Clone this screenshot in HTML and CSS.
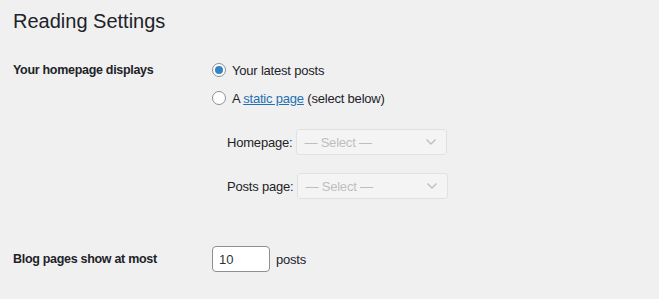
FILE: index.html
```html
<!DOCTYPE html>
<html lang="en">
<head>
    <meta charset="UTF-8">
    <meta name="viewport" content="width=device-width, initial-scale=1.0">
    <title>Reading Settings</title>
    <link rel="stylesheet" href="styles.css">
</head>
<body>
    <div class="wrap">
        <h1>Reading Settings</h1>

        <div class="form-row first">
            <div class="row-label">Your homepage displays</div>
            <div class="row-field">
                <label class="option">
                    <input type="radio" name="show_on_front" checked>
                    <span>Your latest posts</span>
                </label>
                <label class="option">
                    <input type="radio" name="show_on_front">
                    <span>A <a href="#">static page</a> (select below)</span>
                </label>
                <div class="page-selects">
                    <div class="select-row">
                        <label for="page-on-front">Homepage:</label>
                        <select id="page-on-front" disabled>
                            <option>&mdash; Select &mdash;</option>
                        </select>
                    </div>
                    <div class="select-row">
                        <label for="page-for-posts">Posts page:</label>
                        <select id="page-for-posts" disabled>
                            <option>&mdash; Select &mdash;</option>
                        </select>
                    </div>
                </div>
            </div>
        </div>

        <div class="form-row last">
            <div class="row-label">Blog pages show at most</div>
            <div class="row-field inline">
                <input type="number" class="small-text" value="10">
                <span>posts</span>
            </div>
        </div>
    </div>
</body>
</html>
```

FILE: styles.css
```css
body {
    margin: 0;
    background-color: #f0f0f1;
    color: #1d2327;
    font-family: "Segoe UI", "Liberation Sans", Arial, sans-serif;
    font-size: 13px;
    letter-spacing: -0.2px;
}
.wrap {
    padding: 0 13px;
}
h1 {
    font-size: 20px;
    font-weight: 400;
    line-height: 29px;
    margin: 7px 0 0;
    letter-spacing: 0;
}
.form-row {
    display: flex;
}
.form-row.first {
    margin-top: 20px;
}
.form-row.last {
    margin-top: 47px;
}
.row-label {
    width: 199px;
    font-size: 12.5px;
    font-weight: 600;
    letter-spacing: -0.3px;
    line-height: 28px;
}
.form-row.last .row-label {
    line-height: 26px;
}
.option {
    display: flex;
    align-items: center;
    height: 28px;
}
.option input {
    appearance: none;
    -webkit-appearance: none;
    width: 14px;
    height: 14px;
    margin: 0 6px 0 0;
    border: 1px solid #8c8f94;
    border-radius: 50%;
    background: #fff;
    display: flex;
    align-items: center;
    justify-content: center;
}
.option input:checked::before {
    content: "";
    width: 8px;
    height: 8px;
    border-radius: 50%;
    background: #3582c4;
}
a {
    color: #2271b1;
    text-decoration: underline;
}
.page-selects {
    padding: 17px 0 0 15px;
    display: flex;
    flex-direction: column;
    gap: 18px;
}
.select-row {
    display: flex;
    align-items: center;
    gap: 4px;
}
select {
    appearance: none;
    -webkit-appearance: none;
    width: 151px;
    height: 26px;
    padding: 0 24px 0 7px;
    border: 1px solid #dcdcde;
    border-radius: 3px;
    background-color: #f6f7f7;
    color: #a7aaad;
    font-family: inherit;
    font-size: 13px;
    letter-spacing: -0.2px;
    background-image: url("data:image/svg+xml,%3Csvg xmlns='http://www.w3.org/2000/svg' width='12' height='8' viewBox='0 0 12 8'%3E%3Cpath d='M1.5 1.5 6 6l4.5-4.5' fill='none' stroke='%23a7aaad' stroke-width='1.4'/%3E%3C/svg%3E");
    background-repeat: no-repeat;
    background-position: right 9px center;
}
.row-field.inline {
    display: flex;
    align-items: center;
    gap: 6px;
}
.small-text {
    box-sizing: border-box;
    width: 58px;
    height: 26px;
    padding: 0 6px;
    border: 1px solid #8c8f94;
    border-radius: 4px;
    background: #fff;
    color: #2c3338;
    font-family: inherit;
    font-size: 13px;
    -moz-appearance: textfield;
}
.small-text::-webkit-inner-spin-button,
.small-text::-webkit-outer-spin-button {
    -webkit-appearance: none;
    margin: 0;
}
```
